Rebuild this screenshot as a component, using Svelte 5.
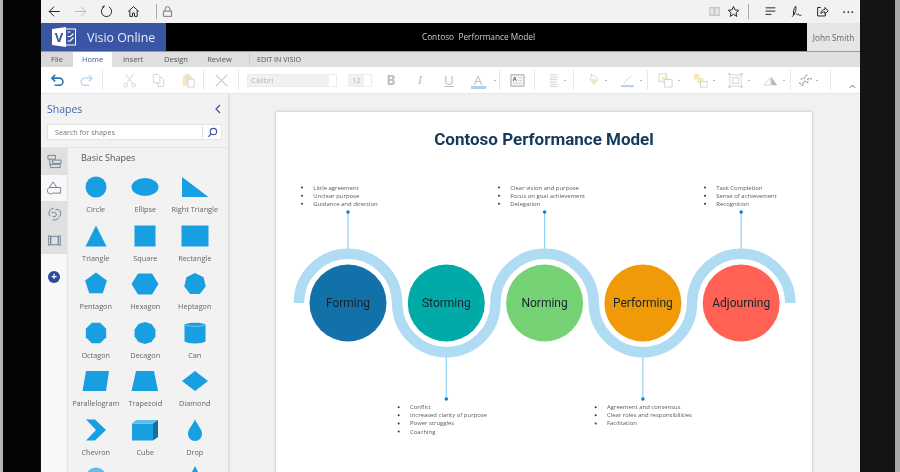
<script>
	function regular(n, r = 11, rot = 0) {
		let pts = []
		for (let i = 0; i < n; i++) {
			const a = rot + (i * 2 * Math.PI) / n
			pts.push((15 + r * Math.sin(a)).toFixed(2) + "," + (12 - r * Math.cos(a)).toFixed(2))
		}
		return pts.join(" ")
	}

	const shapes = [
		{name: "Circle", el: "circle"},
		{name: "Ellipse", el: "ellipse"},
		{name: "Right Triangle", pts: "2,2 2,22 28.5,22"},
		{name: "Triangle", pts: "15,1.5 25.5,22.5 4.5,22.5"},
		{name: "Square", pts: "4.5,1.5 25.5,1.5 25.5,22.5 4.5,22.5"},
		{name: "Rectangle", pts: "1.5,1.5 28.5,1.5 28.5,22.5 1.5,22.5"},
		{name: "Pentagon", pts: regular(5, 11.5)},
		{name: "Hexagon", pts: "1.5,12 8,1.5 22,1.5 28.5,12 22,22.5 8,22.5"},
		{name: "Heptagon", pts: regular(7)},
		{name: "Octagon", pts: regular(8, 11, Math.PI / 8)},
		{name: "Decagon", pts: regular(10, 11)},
		{name: "Can", el: "can"},
		{name: "Parallelogram", pts: "5,2 28,2 25,22 1.5,22"},
		{name: "Trapezoid", pts: "6,2 24,2 28,22 1.5,22"},
		{name: "Diamond", pts: "2,12 15,2 28,12 15,22"},
		{name: "Chevron", pts: "5,1.5 14,1.5 25,12 14,22.5 5,22.5 15,12"},
		{name: "Cube", el: "cube"},
		{name: "Drop", el: "drop"},
		{name: "", el: "sphere"},
		{name: "", el: "none"},
		{name: "", pts: "15,0 18,6 12,6"},
	]

	const stages = [
		{name: "Forming", x: 348, color: "#1271a8"},
		{name: "Storming", x: 446.3, color: "#00aaa6"},
		{name: "Norming", x: 544.6, color: "#75d376"},
		{name: "Performing", x: 642.9, color: "#f19a07"},
		{name: "Adjourning", x: 741.2, color: "#ff6254"},
	]

	const notes = [
		{x: 302, top: 187.6, items: ["Little agreement", "Unclear purpose", "Guidance and direction"]},
		{x: 499, top: 187.6, items: ["Clear vision and purpose", "Focus on goal achievement", "Delegation"]},
		{x: 705, top: 187.6, items: ["Task Completion", "Sense of achievement", "Recognition"]},
		{x: 398.7, top: 407.2, items: ["Conflict", "Increased clarity of purpose", "Power struggles", "Coaching"]},
		{x: 595.7, top: 407.2, items: ["Agreement and consensus", "Clear roles and responsibilities", "Facilitation"]},
	]

	const r = 49.15
	const band = `M298.85 303 A${r} ${r} 0 0 1 397.15 303 A${r} ${r} 0 0 0 495.45 303 A${r} ${r} 0 0 1 593.75 303 A${r} ${r} 0 0 0 692.05 303 A${r} ${r} 0 0 1 790.35 303`
</script>

<div class="device">
	<div class="bezel-left"></div>
	<div class="screen">
		<div class="browser">
			<div class="nav">
				<svg class="bi" viewBox="0 0 16 16"><path d="M14.500 8H1.500M7.500 2 1.500 8 7.500 14" /></svg>
				<svg class="bi off" viewBox="0 0 16 16"><path d="M1.500 8h13M8.500 2 14.500 8 8.500 14" /></svg>
				<svg class="bi" viewBox="0 0 16 16"><path d="M5 2.400A6.300 6.300 0 1 0 11 2.400M5 2.400V0.500M5 2.400H2.500" /></svg>
				<svg class="bi homeicon" viewBox="0 0 16 16"><path d="M1.500 8 8 2l6.500 6M3.500 6.500v7.500h3.300V10h2.400v4h3.300V6.500" /></svg>
				<span class="bar-sep"></span>
				<svg class="bi lock" viewBox="0 0 16 16"><path d="M3 7.500h10v6.500H3zM5 7.500V5a3 3 0 0 1 6 0v2.500" /></svg>
			</div>
			<div class="nav-right">
				<svg class="bi read" viewBox="0 0 16 16"><path class="fillgrey" d="M1.500 2.500h13v11h-13z" /><path class="white" d="M3 4h4v8H3zM9 4h4v8H9z" /></svg>
				<svg class="bi star" viewBox="0 0 16 16"><path d="M8 1.800l1.900 4.200 4.600.5-3.400 3.100.9 4.500L8 11.400l-4 2.700.9-4.500L1.500 6.500l4.600-.5z" /></svg>
				<span class="bar-sep"></span>
				<svg class="bi hub" viewBox="0 0 16 16"><path d="M2 3.500h12M2 7.500h12M2 11.500h7" /></svg>
				<svg class="bi hub" viewBox="0 0 16 16"><path d="M7 1.500C4 5 4 9 4.500 12.500 6 9 8.500 5.500 7 1.500M4.500 12.500l-2 2M7 11c1-1 1.500 1.500 2.500.8s1-1 1.500.2 2 1 3 .5" /></svg>
				<svg class="bi hub" viewBox="0 0 16 16"><path d="M6 3H2v10.500h9.500V10M6 10.500C6 7 8.500 5.500 11 5.500V3l4 4.200-4 3.800V8.500c-2 0-3.800.5-5 2z" /></svg>
				<span class="dots">···</span>
			</div>
		</div>

		<header class="app-head">
			<div class="brand">
				<svg class="logo" viewBox="0 0 24 20">
					<rect class="logo-back" x="11" y="2" width="12.500" height="16" />
					<path class="logo-doc" d="M0 2 14 0V20L0 18z" />
					<path class="logo-mark" d="M15.500 5h3M15.500 9.500h3l3-3M18 14l3.500-3.500M15.500 14H18" />
					<text class="logo-v" x="2.800" y="14.500">V</text>
				</svg>
				<span class="brand-name">Visio Online</span>
			</div>
			<div class="doc-title">Contoso&nbsp; Performance Model</div>
			<div class="user">John Smith</div>
		</header>

		<nav class="tabs">
			<span class="tab file">File</span>
			<span class="tab home">Home</span>
			<span class="tab insert">Insert</span>
			<span class="tab design">Design</span>
			<span class="tab review">Review</span>
			<span class="tab-sep"></span>
			<span class="tab edit">EDIT IN VISIO</span>
		</nav>

		<div class="toolbar">
			<div class="group g1">
				<span class="tool"><svg viewBox="0 0 16 16"><path class="blue" d="M5.500 2 2 5.500 5.500 9M2 5.500h8a3.600 3.600 0 0 1 0 7.500H5" /></svg></span>
				<span class="tool"><svg viewBox="0 0 16 16"><path class="paleblue" d="M10.500 2 14 5.500 10.500 9M14 5.500H6a3.600 3.600 0 0 0 0 7.500h5" /></svg></span>
			</div>
			<div class="group g2">
				<span class="tool"><svg viewBox="0 0 16 16"><path class="pale" d="M4 1l7 10M12 1 5 11" /><circle class="paleblue thin" cx="3.800" cy="13" r="2" /><circle class="paleblue thin" cx="12.200" cy="13" r="2" /></svg></span>
				<span class="tool"><svg viewBox="0 0 16 16"><path class="pale" d="M2.500 1.500h5l2 2v7h-7zM9.500 5h2l2 2v7.500h-6V10.500" /></svg></span>
				<span class="tool"><svg viewBox="0 0 16 16"><path class="tan" d="M2 3h9.500v11H2z" /><path class="pale" d="M7.500 6.500h6.500v8.500H7.500zM5 1.500h3.500V4H5z" /></svg></span>
			</div>
			<div class="group g3">
				<span class="tool"><svg viewBox="0 0 16 16"><path class="x" d="M2 2l12 12M14 2 2 14" /></svg></span>
			</div>
			<div class="group g4">
				<div class="select font-select"><span>Calibri</span><i></i></div>
				<div class="select size-select"><span>12</span><i></i></div>
				<span class="fmt b">B</span>
				<span class="fmt i">I</span>
				<span class="fmt u">U</span>
				<span class="fmt a">A<b></b></span>
				<i class="caret"></i>
			</div>
			<div class="group g5">
				<span class="tool"><svg viewBox="0 0 16 16"><path class="greyline" d="M1 2h14v12H1z" /><path class="pale" d="M9 5h4M9 8h4M3 11h10" /><text class="mini" x="3" y="8.500">A</text></svg></span>
			</div>
			<div class="group g6">
				<span class="tool"><svg viewBox="0 0 16 16"><path class="pale" d="M3 2h8M3 4.500h8M3 7h8M3 9.500h8M3 12h8M3 14.500h8" /></svg><i class="caret"></i></span>
			</div>
			<div class="group g7">
				<span class="tool"><svg viewBox="0 0 16 16"><path class="pale" d="M5 6 9 2l5 5-4.500 5zM7 3.500V1" /><path class="tan" d="M5 6l9 1-4.500 5z" /></svg><i class="caret"></i></span>
				<span class="tool"><svg viewBox="0 0 16 16"><path class="pale" d="M4 11 12 3" /><path class="barblue" d="M1 14h14" /></svg><i class="caret"></i></span>
			</div>
			<div class="group g8">
				<span class="tool"><svg viewBox="0 0 16 16"><rect class="pale" x="1" y="1" width="8" height="8" /><rect class="tanfill" x="4" y="4" width="7" height="7" /><rect class="pale" x="7" y="7" width="8" height="8" /></svg><i class="caret"></i></span>
				<span class="tool"><svg viewBox="0 0 16 16"><rect class="tanfill" x="1" y="1" width="6" height="6" /><rect class="tanfill" x="5" y="5" width="6" height="6" /><rect class="pale" x="8" y="9" width="7" height="6" /></svg><i class="caret"></i></span>
				<span class="tool"><svg viewBox="0 0 16 16"><rect class="pale" x="2" y="2" width="12" height="12" /><rect class="pale" x="5" y="5" width="6" height="6" /><path class="paleblue" d="M0 1h3M13 1h3M0 15h3M13 15h3" /></svg><i class="caret"></i></span>
				<span class="tool"><svg viewBox="0 0 16 16"><path class="pale" d="M1 13 8 5v8z" /><path class="solidgrey" d="M9 4l6 9H9z" /></svg><i class="caret"></i></span>
			</div>
			<div class="group g9">
				<span class="tool"><svg viewBox="0 0 16 16"><path class="squiggle" d="M1 11c2-1 2 3 4 2s-1-3 1-4 2 2 4 1-1-3 1-4 2 1 4 0M3 7c1-2 3 0 4-2s1-2 3-3" /></svg><i class="caret"></i></span>
			</div>
			<div class="group g10">
				<svg class="collapse" viewBox="0 0 8 6"><path d="M1 5l3-3 3 3" /></svg>
			</div>
		</div>

		<div class="main">
			<aside class="sidebar">
				<div class="side-head">
					<span class="side-title">Shapes</span>
					<svg class="side-back" viewBox="0 0 8 10"><path d="M6 1 2 5l4 4" /></svg>
				</div>
				<div class="search">
					<span class="search-text">Search for shapes</span>
					<span class="search-btn">
						<svg viewBox="0 0 12 12"><circle cx="7" cy="5" r="3.500" /><path d="M4.500 7.500 1.500 10.800" /></svg>
					</span>
				</div>
				<div class="side-body">
					<div class="rail">
						<span class="rail-item grey"><svg viewBox="0 0 16 16"><path d="M1 1.500h8v4H1zM6 6.500h9v3.500H6zM4 11h10v3.500H4zM3 5.500v7" /></svg></span>
						<span class="rail-item"><svg viewBox="0 0 16 16"><path d="M6.500 2 10.500 8h-8zM5 8a3.500 3.500 0 1 0 1 6h8.500V8H10" /></svg></span>
						<span class="rail-item grey"><svg viewBox="0 0 16 16"><path d="M7 1.500a5 5 0 0 0-4 8M9 3a4 4 0 0 1 5 6c-1 3-5 6-8 4.500M5 6c2-1 5 0 5 2s-2 3-4 2" /></svg></span>
						<span class="rail-item grey"><svg viewBox="0 0 16 16"><path d="M4 3.500h8v9H4zM1.500 3h2l.5 2-.5 3 .5 2-.5 3h-2l.5-3-.5-2 .5-3zM12.500 3h2l-.5 2 .5 3-.5 2 .5 3h-2l-.5-3 .5-2-.5-3z" /></svg></span>
						<span class="add">+</span>
					</div>
					<div class="stencil">
						<div class="stencil-title">Basic Shapes</div>
						<div class="shape-grid">
							{#each shapes as s}
								<div class="shape">
									<svg viewBox="0 0 30 24">
										{#if s.pts}
											<polygon points={s.pts} />
										{:else if s.el === "circle"}
											<circle cx="15" cy="12" r="10.500" />
										{:else if s.el === "ellipse"}
											<ellipse cx="15" cy="12" rx="13.500" ry="9" />
										{:else if s.el === "can"}
											<path d="M4.500 3.500C8 1 22 1 25.500 3.500V20.500C22 23 8 23 4.500 20.500z" />
											<path class="rim" d="M4.500 3.500C8 6 22 6 25.500 3.500" />
										{:else if s.el === "cube"}
											<polygon points="2,5.500 23,5.500 23,22.500 2,22.500" />
											<polygon class="cube-top" points="2,5.500 6,2 28,2 23,5.500" />
											<polygon class="cube-side" points="23,5.500 28,2 28,19 23,22.500" />
										{:else if s.el === "drop"}
											<path d="M15 1C16 6 22 10 22 16A7 7 0 0 1 8 16C8 10 14 6 15 1z" />
										{:else if s.el === "sphere"}
											<circle class="cube-top" cx="15" cy="12" r="10.500" />
										{/if}
									</svg>
									<span class="shape-name">{s.name}</span>
								</div>
							{/each}
						</div>
					</div>
				</div>
			</aside>

			<div class="canvas">
				<div class="page">
					<h1>Contoso Performance Model</h1>
					<svg class="diagram" viewBox="276 150 536 322">
						{#each stages as st, i}
							{#if i % 2 === 0}
								<line class="stem" x1={st.x} y1="212" x2={st.x} y2="250" />
								<circle class="dot" cx={st.x} cy="212" r="1.800" />
							{:else}
								<line class="stem" x1={st.x} y1="356" x2={st.x} y2="399" />
								<circle class="dot" cx={st.x} cy="399" r="1.800" />
							{/if}
						{/each}
						<path class="band" d={band} />
						{#each stages as st}
							<circle cx={st.x} cy="303" r="38.500" fill={st.color} />
							<text class="stage" x={st.x} y="307.300">{st.name}</text>
						{/each}
						{#each notes as n}
							{#each n.items as item, i}
								<circle class="bullet" cx={n.x} cy={n.top + i * 8.100} r="1" />
								<text class="note" x={n.x + 11.300} y={n.top + 2 + i * 8.100}>{item}</text>
							{/each}
						{/each}
					</svg>
				</div>
			</div>
		</div>
	</div>
	<div class="bezel-right"></div>
</div>

<style>
	:global(body) {
		margin: 0;
		background: #000;
	}

	.device {
		display: flex;
		width: 900px;
		height: 472px;
		overflow: hidden;
		font-family: "Open Sans", "Liberation Sans", sans-serif;
		filter: blur(0.35px);
	}

	.bezel-left {
		width: 38px;
		border-left: 3px solid #b5b5b5;
		background: #050505;
	}

	.bezel-right {
		width: 35px;
		background: #141414;
		border-right: 5px solid #a9a9a9;
	}

	.screen {
		width: 819px;
		display: flex;
		flex-direction: column;
		background: #f1f1f1;
	}

	svg {
		display: block;
	}

	/* browser bar */
	.browser {
		height: 23px;
		display: flex;
		justify-content: space-between;
		background: #f2f2f2;
	}

	.nav,
	.nav-right {
		display: flex;
		align-items: center;
	}

	.nav {
		padding-left: 6.500px;
		gap: 13px;
	}

	.bi {
		width: 13px;
		height: 13px;
		fill: none;
		stroke: #222;
		stroke-width: 1.200;
	}

	.bi.off {
		stroke: #b9b9b9;
	}

	.bi.homeicon {
		margin-left: 1px;
	}

	.bi.lock {
		stroke: #777;
		margin-left: -8.500px;
	}

	.bar-sep {
		width: 1px;
		height: 15px;
		background: #aaa;
		margin-left: 3px;
	}

	.nav-right {
		padding-right: 4px;
	}

	.read {
		margin-right: 6px;
		stroke: none;
	}

	.fillgrey {
		fill: #c4c4c4;
		stroke: none;
	}

	.white {
		fill: #e5e5e5;
		stroke: none;
	}

	.star {
		margin-right: 8px;
	}

	.nav-right .bar-sep {
		margin: 0;
		margin-right: 15px;
	}

	.hub {
		margin-right: 13px;
	}

	.dots {
		font-size: 11px;
		font-weight: 700;
		letter-spacing: 1px;
		color: #333;
		margin-left: 1px;
		margin-right: 1px;
	}

	/* app header */
	.app-head {
		display: flex;
		height: 29px;
		background: #000;
		border-bottom: 1px solid #9a9a9a;
		box-sizing: border-box;
	}

	.brand {
		width: 125px;
		display: flex;
		align-items: center;
		gap: 11px;
		padding-left: 11px;
		box-sizing: border-box;
		background: #3955a3;
		color: #fff;
	}

	.logo {
		width: 24px;
		height: 20px;
		flex: none;
	}

	.logo-back {
		fill: none;
		stroke: #fff;
		stroke-width: 1;
	}

	.logo-doc {
		fill: #fff;
	}

	.logo-mark {
		fill: none;
		stroke: #fff;
		stroke-width: 1.200;
	}

	.logo-v {
		font-size: 13px;
		font-weight: 700;
		fill: #3955a3;
	}

	.brand-name {
		font-size: 12.400px;
		white-space: nowrap;
		color: #e9edf8;
	}

	.doc-title {
		flex: 1;
		text-align: center;
		font-size: 8.300px;
		line-height: 28px;
		color: #ccc;
		padding-right: 16px;
	}

	.user {
		width: 53px;
		background: #e6e6e6;
		color: #666;
		font-size: 8.200px;
		line-height: 29px;
		text-align: center;
		border-bottom: 1px solid #e6e6e6;
	}

	/* ribbon tabs */
	.tabs {
		display: flex;
		height: 15px;
		align-items: stretch;
		background: #dfdfdf;
		font-size: 7.500px;
		line-height: 15px;
		color: #555;
	}

	.tab {
		text-align: center;
	}

	.file {
		width: 32px;
		background: #d9d9d9;
	}

	.home {
		width: 39px;
		background: #fff;
		color: #3955a3;
	}

	.insert {
		width: 42px;
	}

	.design {
		width: 44px;
	}

	.review {
		width: 43px;
	}

	.tab-sep {
		width: 1px;
		height: 11px;
		margin: 2px 6px 0 8px;
		background: #ccc;
	}

	.edit {
		font-size: 7.200px;
		margin-left: 1px;
	}

	.toolbar {
		display: flex;
		height: 26px;
		background: #fff;
		border-bottom: 1px solid #e8e8e8;
		box-sizing: content-box;
	}

	.group {
		display: flex;
		align-items: center;
		box-sizing: border-box;
		height: 20px;
		margin-top: 3px;
		border-right: 1px solid #e8e8e8;
	}

	.tool {
		width: 29.500px;
		display: flex;
		justify-content: center;
		align-items: center;
		position: relative;
	}

	.tool svg {
		width: 15px;
		height: 15px;
		fill: none;
		stroke-width: 1;
	}

	.blue {
		stroke: #2f74b5;
		stroke-width: 1.700;
	}

	.paleblue {
		stroke: #bcd6ec;
		stroke-width: 1.500;
	}

	.paleblue.thin {
		stroke-width: 1;
	}

	.pale {
		stroke: #d2d2d2;
		fill: #fff;
	}

	.tan {
		stroke: none;
		fill: #f5e4c5;
	}

	.tanfill {
		stroke: none;
		fill: #fbe7bf;
	}

	.x {
		stroke: #c8c8c8;
		stroke-width: 1.300;
	}

	.greyline {
		stroke: #9f9f9f;
		fill: #f6f6f6;
	}

	.squiggle {
		stroke: #a5a5a5;
		fill: none;
		stroke-width: 1.400;
		stroke-dasharray: 2.500 0.800;
	}

	.solidgrey {
		fill: #b5b5b5;
		stroke: none;
	}

	.barblue {
		stroke: #b7cfe6;
		stroke-width: 2.200;
	}

	.mini {
		font-size: 6px;
		font-weight: 700;
		fill: #3955a3;
	}

	.g1 {
		width: 62px;
		padding-left: 1.500px;
	}

	.g2 {
		width: 101px;
		padding-left: 11.500px;
	}

	.g3 {
		width: 35px;
		justify-content: center;
	}

	.g4 {
		width: 261px;
		padding-left: 8px;
	}

	.g5 {
		width: 35px;
		justify-content: center;
	}

	.g6 {
		width: 39px;
		justify-content: center;
	}

	.g7 {
		width: 74px;
		padding-left: 1px;
	}

	.g7 .tool,
	.g8 .tool {
		width: 35px;
	}

	.g8 {
		width: 143px;
	}

	.g9 {
		width: 40px;
	}

	.g10 {
		flex: 1;
		border-right: none;
		justify-content: flex-end;
		align-items: flex-end;
		padding: 0 4px 1px 0;
	}

	.collapse {
		width: 7px;
		height: 6px;
		fill: none;
		stroke: #555;
		stroke-width: 1;
	}

	.select {
		display: flex;
		align-items: center;
		justify-content: space-between;
		height: 13px;
		box-sizing: border-box;
		background: #f1f1f1;
		border: 1px solid #ececec;
		font-size: 7.500px;
		color: #b5b5b5;
		padding-left: 3px;
	}

	.select i {
		width: 7px;
		height: 11px;
		background: #fff;
	}

	.font-select {
		width: 90px;
		margin-right: 11px;
	}

	.size-select {
		width: 24px;
		margin-right: 4.500px;
	}

	.fmt {
		width: 29px;
		text-align: center;
		font-size: 13.500px;
		line-height: 16px;
		color: #bdbdbd;
		position: relative;
	}

	.fmt.b {
		font-weight: 700;
	}

	.fmt.i {
		font-style: italic;
		font-family: "Liberation Serif", serif;
	}

	.fmt.u {
		text-decoration: underline;
	}

	.fmt b {
		display: block;
		height: 3px;
		margin: -2px 7px 0;
		background: #b7cfe6;
	}

	.caret {
		display: block;
		width: 2px;
		height: 1px;
		background: #bbb;
		flex: none;
		margin-left: 1px;
	}

	.tool .caret {
		position: absolute;
		right: 3px;
		top: 7px;
	}

	/* sidebar */
	.main {
		flex: 1;
		display: flex;
		min-height: 0;
	}

	.sidebar {
		width: 188px;
		background: #f2f2f2;
		border-right: 1px solid #dcdcdc;
		box-shadow: 1px 0 2px #e2e2e2;
		box-sizing: border-box;
		display: flex;
		flex-direction: column;
		overflow: hidden;
		position: relative;
	}

	.side-head {
		height: 30px;
		display: flex;
		align-items: center;
		justify-content: space-between;
		padding: 0 6px 0 6px;
	}

	.side-title {
		font-size: 10.500px;
		color: #4a63ad;
	}

	.side-back {
		width: 8px;
		height: 10px;
		fill: none;
		stroke: #3955a3;
		stroke-width: 1.200;
	}

	.search {
		margin: 0 6px 7px;
		height: 16px;
		display: flex;
		align-items: center;
		justify-content: space-between;
		background: #fff;
		border: 1px solid #e4e4e4;
		box-sizing: border-box;
		width: 175px;
	}

	.search-text {
		font-size: 7.200px;
		color: #777;
		padding-left: 7px;
	}

	.search-btn {
		width: 18px;
		height: 12px;
		border-left: 1px solid #ddd;
		display: flex;
		align-items: center;
		justify-content: center;
	}

	.search-btn svg {
		width: 11px;
		height: 11px;
		fill: none;
		stroke: #3955a3;
		stroke-width: 1.200;
	}

	.side-body {
		flex: 1;
		display: flex;
		border-top: 1px solid #e6e6e6;
		min-height: 0;
	}

	.rail {
		width: 26px;
		flex: none;
		background: #f8f8f8;
		border-right: 1px solid #e4e4e4;
		display: flex;
		flex-direction: column;
		align-items: stretch;
	}

	.rail-item {
		height: 26.500px;
		display: flex;
		align-items: center;
		justify-content: center;
	}

	.rail-item.grey {
		background: #e0e0e0;
	}

	.rail-item svg {
		width: 15px;
		height: 15px;
		fill: none;
		stroke: #6e7f99;
		stroke-width: 1;
	}

	.add {
		width: 12px;
		height: 12px;
		margin: 17px auto 0;
		border-radius: 50%;
		background: #2d4a9c;
		color: #fff;
		font-size: 10px;
		line-height: 11px;
		font-weight: 700;
		text-align: center;
	}

	.stencil {
		flex: 1;
	}

	.stencil-title {
		font-size: 9px;
		line-height: 12px;
		color: #555;
		margin: 3.500px 0 0 13px;
	}

	.shape-grid {
		display: grid;
		grid-template-columns: repeat(3, 49.500px);
		grid-auto-rows: 48.500px;
		margin: 11.500px 0 0 3px;
	}

	.shape {
		display: flex;
		flex-direction: column;
		align-items: center;
	}

	.shape svg {
		width: 30px;
		height: 24px;
		fill: #189fe2;
	}

	.rim {
		fill: none;
		stroke: #7fcbf0;
		stroke-width: 0.800;
	}

	.cube-top {
		fill: #62bdea;
	}

	.cube-side {
		fill: #146e9e;
	}

	.shape-name {
		font-size: 7.300px;
		line-height: 10px;
		margin-top: 5px;
		color: #666;
		white-space: nowrap;
	}

	/* drawing */
	.canvas {
		flex: 1;
		background: #f1f1f1;
		padding: 18px 0 0 47px;
		overflow: hidden;
	}

	.page {
		width: 536px;
		height: 360px;
		background: #fff;
		box-shadow: 0 0 3px #b5b5b5;
	}

	h1 {
		margin: 0;
		height: 38px;
		padding-top: 17px;
		box-sizing: border-box;
		text-align: center;
		font-family: Roboto, "Open Sans", sans-serif;
		font-size: 17px;
		line-height: 20px;
		font-weight: 700;
		color: #13395c;
	}

	.diagram {
		width: 536px;
		height: 322px;
	}

	.band {
		fill: none;
		stroke: #b0dcf3;
		stroke-width: 10.500;
	}

	.stem {
		stroke: #8ed0f2;
		stroke-width: 1.200;
	}

	.dot {
		fill: #0a84d0;
	}

	.bullet {
		fill: #333;
	}

	.stage {
		font-family: Roboto, "Open Sans", sans-serif;
		font-size: 12px;
		text-anchor: middle;
		fill: #14242e;
	}

	.note {
		font-size: 5.950px;
		fill: #5a5a5a;
	}
</style>
